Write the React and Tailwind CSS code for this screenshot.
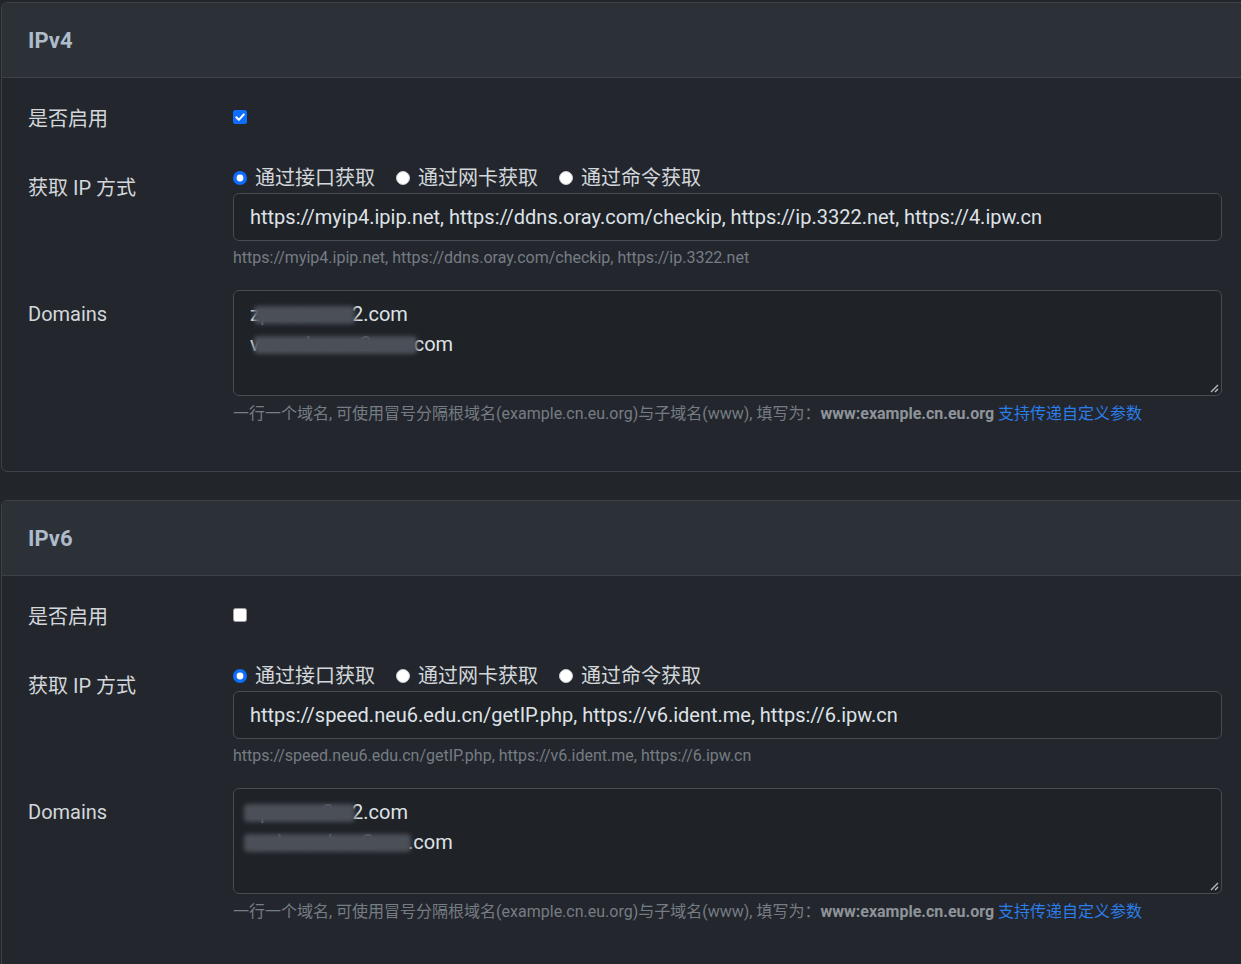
import React from "react";

const FONT = { fontFamily: 'Roboto, "Noto Sans CJK SC", sans-serif' };

// Radio / checkbox glyphs
function Radio({ checked }) {
  return checked ? (
    <svg width="14" height="14" viewBox="0 0 14 14" className="shrink-0">
      <circle cx="7" cy="7" r="7" fill="#0d6efd" />
      <circle cx="7" cy="7" r="3.4" fill="#ffffff" />
    </svg>
  ) : (
    <svg width="14" height="14" viewBox="0 0 14 14" className="shrink-0">
      <circle cx="7" cy="7" r="6.5" fill="#ffffff" stroke="#c8ccd0" strokeWidth="1" />
    </svg>
  );
}

function Checkbox({ checked }) {
  return checked ? (
    <svg width="14" height="14" viewBox="0 0 14 14">
      <rect x="0" y="0" width="14" height="14" rx="2.5" fill="#0d6efd" />
      <path d="M3.3 7.2 L5.9 9.8 L10.8 4.4" fill="none" stroke="#fff" strokeWidth="2" strokeLinecap="round" strokeLinejoin="round" />
    </svg>
  ) : (
    <svg width="14" height="14" viewBox="0 0 14 14">
      <rect x="0.5" y="0.5" width="13" height="13" rx="2" fill="#ffffff" stroke="#9aa0a6" strokeWidth="1" />
    </svg>
  );
}

// Blurred (redacted) chunk of text
function Redact({ w, children }) {
  return (
    <span className="relative inline-block whitespace-nowrap overflow-visible align-top" style={{ width: w }}>
      <span className="block overflow-hidden text-[#6c7178]">{children}</span>
      <span className="absolute left-[-6px] right-[-3px] top-[7px] bottom-[5px] bg-[#4b5058] blur-[2px] rounded-sm" />
    </span>
  );
}

function Section({ title, enabled, urls, domains }) {
  return (
    <div className="mb-[28px] w-[1250px] rounded-[6px] border border-[#3d4249] bg-[#23272d] overflow-hidden">
      <div className="h-[75px] flex items-center pl-[26px] bg-[#2c3138] border-b border-[#3d4249]">
        <span className="text-[22px] font-bold text-[#aebbcb]">{title}</span>
      </div>

      <div className="pl-[26px] pr-[19px] pt-[26px] pb-[45px] w-[1239px]">
        {/* 是否启用 */}
        <div className="flex">
          <div className="w-[205px] text-[20px] leading-[30px] text-[#d3d7db]">是否启用</div>
          <div className="pt-[6px]">
            <Checkbox checked={enabled} />
          </div>
        </div>

        {/* 获取 IP 方式 */}
        <div className="flex mt-[29px]">
          <div className="w-[205px] pt-[10px] text-[20px] leading-[30px] text-[#d3d7db]">获取 IP 方式</div>
          <div className="flex-1">
            <div className="flex items-center h-[30px] text-[20px] text-[#d3d7db]">
              <label className="flex items-center gap-[8px] mr-[21px]">
                <Radio checked />
                <span>通过接口获取</span>
              </label>
              <label className="flex items-center gap-[8px] mr-[21px]">
                <Radio />
                <span>通过网卡获取</span>
              </label>
              <label className="flex items-center gap-[8px]">
                <Radio />
                <span>通过命令获取</span>
              </label>
            </div>
            <div className="h-[48px] flex items-center px-[16px] rounded-[6px] border border-[#474c53] bg-[#1f2227] text-[20px] text-[#dee2e6] whitespace-nowrap">
              {urls.join(", ")}
            </div>
            <div className="mt-[5px] text-[16px] leading-[24px] text-[#767c84]">
              {urls.slice(0, 3).join(", ")}
            </div>
          </div>
        </div>

        {/* Domains */}
        <div className="flex mt-[20px]">
          <div className="w-[205px] pt-[9px] text-[20px] leading-[30px] text-[#d3d7db]">Domains</div>
          <div className="flex-1">
            <div className="relative h-[106px] rounded-[6px] border border-[#474c53] bg-[#1f2227] px-[16px] py-[8px] text-[20px] leading-[30px] text-[#dee2e6]">
              {domains.map((d, i) => (
                <div key={i} className="whitespace-nowrap">
                  <span>{d.pre}</span>
                  <Redact w={d.w}>{d.hidden}</Redact>
                  <span>{d.post}</span>
                </div>
              ))}
              <svg width="10" height="10" viewBox="0 0 10 10" className="absolute right-[2px] bottom-[2px]">
                <path d="M9 2 L2 9 M9 6 L6 9" stroke="#b8bcc0" strokeWidth="1.4" />
              </svg>
            </div>
            <div className="mt-[6px] text-[16px] leading-[24px] text-[#767c84] whitespace-nowrap">
              一行一个域名, 可使用冒号分隔根域名(example.cn.eu.org)与子域名(www), 填写为：
              <b className="font-bold text-[#8e949a]">www:example.cn.eu.org</b>{" "}
              <a className="text-[#2b7de9]">支持传递自定义参数</a>
            </div>
          </div>
        </div>
      </div>
    </div>
  );
}

export default function App() {
  return (
    <div className="min-h-[964px] bg-[#22262b] pt-[2px] pl-[1px] overflow-hidden" style={FONT}>
      <Section
        title="IPv4"
        enabled
        urls={["https://myip4.ipip.net", "https://ddns.oray.com/checkip", "https://ip.3322.net", "https://4.ipw.cn"]}
        domains={[
          { pre: "z", hidden: "pxxxeu", w: 92, post: "2.com" },
          { pre: "v", hidden: "xxxxdxxxxx2.", w: 154, post: "com" },
        ]}
      />
      <Section
        title="IPv6"
        enabled={false}
        urls={["https://speed.neu6.edu.cn/getIP.php", "https://v6.ident.me", "https://6.ipw.cn"]}
        domains={[
          { pre: "", hidden: "zpxxxeu2", w: 102, post: "2.com" },
          { pre: "", hidden: "vadxxxxdxxx2", w: 158, post: ".com" },
        ]}
      />
    </div>
  );
}
